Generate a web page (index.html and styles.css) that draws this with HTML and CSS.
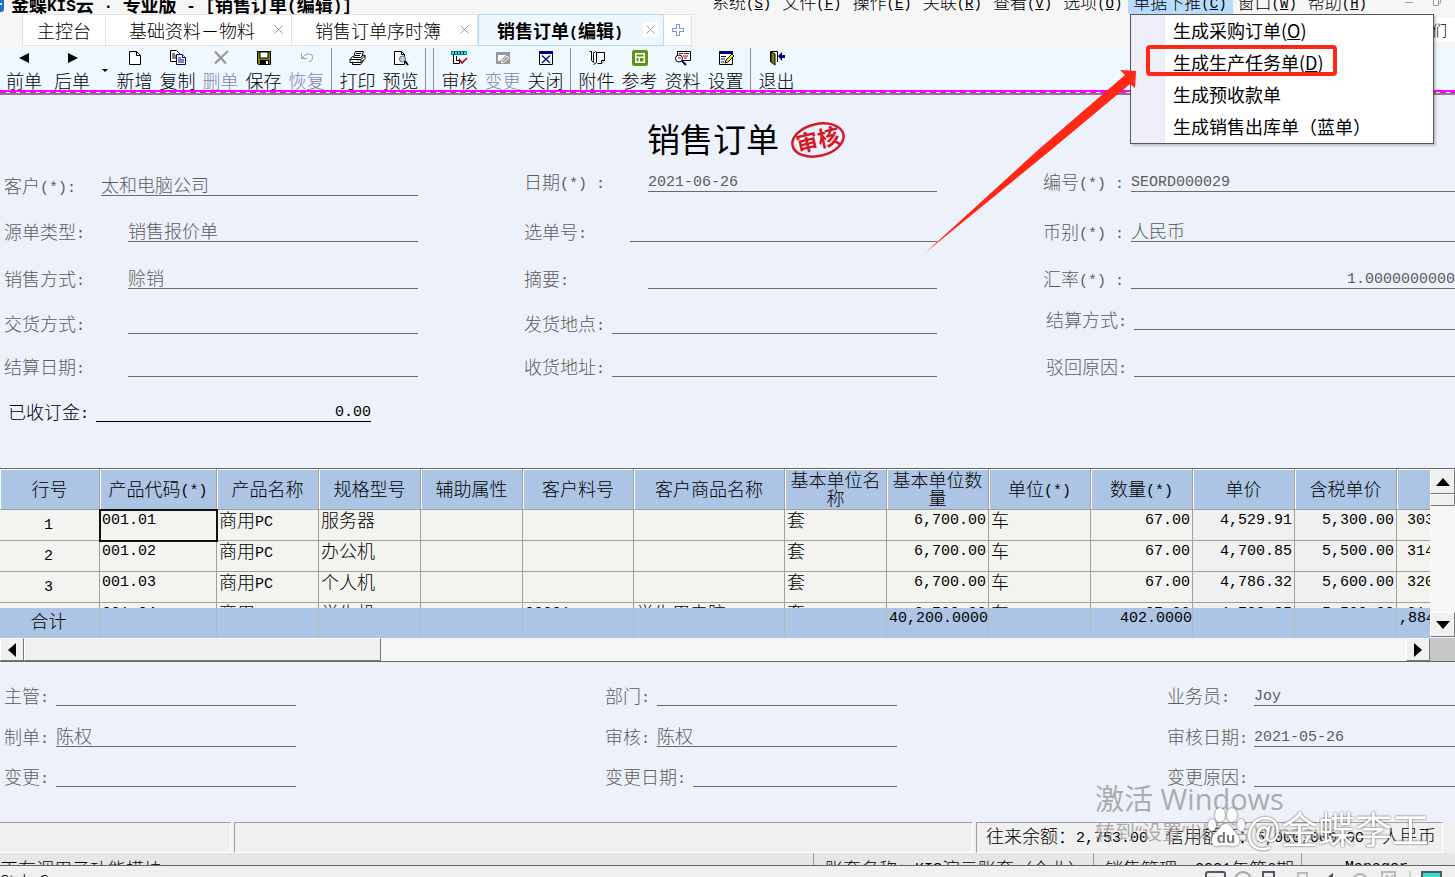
FILE: index.html
```html
<!DOCTYPE html>
<html lang="zh-CN">
<head>
<meta charset="utf-8">
<title>销售订单(编辑)</title>
<link rel="stylesheet" href="styles.css">
</head>
<body>
<div class="app">
  <header class="titlebar">
    <svg class="app-logo" width="4" height="20" viewBox="0 0 4 20"><path d="M0 2h1q3 0 3 3v10q0 3-3 3H0z" fill="#1b6fd0"/><path d="M0 10h2" stroke="#fff" stroke-width="2"/></svg>
    <h1 class="app-title">金蝶<span class="n">KIS</span>云<span class="n"> · </span>专业版<span class="n"> - [</span>销售订单<span class="n">(</span>编辑<span class="n">)]</span></h1>
    <nav class="menubar">
      <button>系统<span class="n">(<u>S</u>)</span></button>
      <button>文件<span class="n">(<u>F</u>)</span></button>
      <button>操作<span class="n">(<u>E</u>)</span></button>
      <button>关联<span class="n">(<u>R</u>)</span></button>
      <button>查看<span class="n">(<u>V</u>)</span></button>
      <button>选项<span class="n">(<u>O</u>)</span></button>
      <button class="open">单据下推<span class="n">(<u>C</u>)</span></button>
      <button>窗口<span class="n">(<u>W</u>)</span></button>
      <button>帮助<span class="n">(<u>H</u>)</span></button>
    </nav>
    <svg class="win-controls" width="82" height="14" viewBox="0 0 82 14" fill="none" stroke="#9a9a9a"><path d="M32 2.500h8M60.500 0v5.500h5V0M62.500-1v-2h5v6h-2"/></svg>
  </header>

  <div class="tabs">
    <button class="tab tab-home">主控台</button>
    <button class="tab">基础资料－物料<svg class="x" width="9" height="9" viewBox="0 0 9 9"><path d="M.5.5l8 8M8.500.5l-8 8"/></svg></button>
    <button class="tab">销售订单序时簿<svg class="x" width="9" height="9" viewBox="0 0 9 9"><path d="M.5.5l8 8M8.500.5l-8 8"/></svg></button>
    <button class="tab active"><span>销售订单<span class="n">(</span>编辑<span class="n">)</span></span><svg class="x boxed" width="15" height="15" viewBox="-3 -3 15 15"><path d="M.5.5l8 8M8.500.5l-8 8"/></svg></button>
    <button class="tab tab-add" aria-label="新建标签"><svg width="12" height="12" viewBox="0 0 12 12" fill="#fff" stroke="#6f93d0"><path d="M4.500.5h3v4h4v3h-4v4h-3v-4h-4v-3h4z"/></svg></button>
    <span class="side-tip">们</span>
  </div>

  <div class="toolbar">
    <button class="wide"><svg width="16" height="16" viewBox="0 0 16 16"><path d="M3 8l10-5v10z"/></svg>前单</button>
    <button class="wide"><svg width="16" height="16" viewBox="0 0 16 16"><path d="M14 8L4 3v10z"/></svg>后单</button>
    <button class="drop" aria-label="更多"><svg width="6" height="4" viewBox="0 0 6 4"><path d="M0 0h6L3 3z"/></svg></button>
    <button><svg width="16" height="16" viewBox="0 0 16 16" fill="#fff" stroke="#000"><path d="M2.500 1.500h7l4 4v9h-11zM9.500 1.500v4h4"/></svg>新增</button>
    <button><svg width="16" height="16" viewBox="0 0 16 16" fill="#fff"><path d="M.5.5h6l3 3v8h-9z" stroke="#000"/><path d="M2 4h3M2 6h4M2 8h4" stroke="#000"/><path d="M6.500 4.500h6l3 3v7h-9z" stroke="#000080"/><path d="M8 8h3M8 10h6M8 12h6M12.500 4.500v3h3" stroke="#000080"/></svg>复制</button>
    <button disabled><svg width="16" height="16" viewBox="0 0 16 16" fill="none"><path d="M3 2.500l11 12M16 2L3 14.500" stroke="#fff" stroke-width="2"/><path d="M2 1.500l11 12M15 1L2 13.500" stroke="#999" stroke-width="2.400"/></svg>删单</button>
    <button><svg width="16" height="16" viewBox="0 0 16 16"><path d="M1.500 1.500h13v13h-12l-1-1z" fill="#808000" stroke="#000"/><path d="M4 2h8v6H4z" fill="#fff" stroke="#000"/><path d="M4 10h9v5H4z"/><path d="M10 11h2v3h-2z" fill="#fff"/></svg>保存</button>
    <button disabled><svg width="16" height="16" viewBox="0 0 16 16" fill="none"><path d="M2.500 4v5h5M3 8q5-6 10-3 2 5-3 7" stroke="#fff" transform="translate(1 1)"/><path d="M2.500 3.500v5h5M3 8q5-6 10-3 2 5-3 7" stroke="#999"/></svg>恢复</button>
    <i class="sep"></i>
    <button><svg width="17" height="16" viewBox="0 0 17 16" fill="#fff" stroke="#000"><path d="M6.500 1.500h8l-2 6h-8zM7 3.500h5M6 5.500h5"/><path d="M3.500 6.500L1 9.500v3h11l4-4v-3l-2-.5-2 2.500H5zM1 9.500h11v3M12 9.500l4-4M3.500 12.500v2h8l3-4"/><path d="M8 11h2" stroke="#c9b400"/></svg>打印</button>
    <button><svg width="16" height="16" viewBox="0 0 16 16" fill="#fff" stroke="#000"><path d="M1.500 1.500h7l3 3v10h-10zM8.500 1.500v3h3"/><circle cx="9.500" cy="9" r="3" fill="#a8e0e0" stroke="#666"/><path d="M12 11l3 4" stroke-width="2"/></svg>预览</button>
    <i class="sep"></i><i class="sep"></i>
    <button><svg width="17" height="16" viewBox="0 0 17 16" fill="none" stroke="#000"><path d="M.5 1.500h15v3H.5z" fill="#0ff" stroke="#008080"/><path d="M3.500 2v2M6.500 2v2M9.500 2v2M12.500 2v2"/><path d="M2.500 5v8.500h6v-3h-3V6" fill="#fff"/><path d="M8 9l3 4 5-5" stroke="#b00020" stroke-width="1.600"/></svg>审核</button>
    <button disabled><svg width="16" height="16" viewBox="0 0 16 16"><path d="M1 2h14v12H1z" fill="#999"/><path d="M3 5h8L5 11H3z" fill="#fff"/><path d="M6 12l6-6 2 2-6 5z" fill="#999" stroke="#fff"/></svg>变更</button>
    <button><svg width="16" height="16" viewBox="0 0 16 16" fill="#fff"><path d="M1.500 1.500h13v13h-13z" stroke="#000"/><path d="M1 1h14v3H1z" fill="#000080"/><path d="M4 5.500l8 7.500M12 5.500L4 13" stroke="#000080" stroke-width="1.300"/></svg>关闭</button>
    <i class="sep"></i>
    <button><svg width="17" height="16" viewBox="0 0 17 16" fill="#fff" stroke="#000"><path d="M5.500 2.500h11v8l-3 3h-4"/><path d="M1.500 1.500h2v9l2 2V3.500l2-2 1 1v10l-3 2M13.500 13.500v-3h3"/></svg>附件</button>
    <button><svg width="16" height="16" viewBox="0 0 16 16"><rect width="16" height="16" rx="2" fill="#5d9612"/><path d="M3 3h10v10H3z" fill="#fff"/><path d="M4.500 4.500h7v2h-7zM4.500 8h2v3.500h-2zM8 8h3.500v3.500H8z" fill="#5d9612"/></svg>参考</button>
    <button><svg width="17" height="16" viewBox="0 0 17 16" fill="#fff" stroke="#000"><path d="M3.500 1.500h13v9h-13z"/><path d="M5 3.500h4M10 3.500h5M9 6h5M10 8h3" stroke="#a00020"/><circle cx="5" cy="8.500" r="3.500"/><path d="M4 8h3" stroke="#a00020"/><path d="M8 11l4 4" stroke="#000080" stroke-width="2"/></svg>资料</button>
    <button><svg width="16" height="16" viewBox="0 0 16 16" fill="#fff"><path d="M1.500 1.500h13v13h-13z" stroke="#000"/><path d="M1 1h14v3H1z" fill="#000080"/><path d="M3 6.500h5M3 9h4M3 12h3" stroke="#000080"/><path d="M7 13l1-3 6-6 2 2-6 6z" fill="#ffe600" stroke="#000"/></svg>设置</button>
    <i class="sep"></i>
    <button><svg width="16" height="16" viewBox="0 0 16 16"><path d="M1.500 12V1.500h7V12" fill="none" stroke="#000"/><path d="M2 2l4 2v11l-4-3z" fill="#808000" stroke="#000"/><path d="M9 6l4-4v3h3v3h-3v3z" fill="#000080"/></svg>退出</button>
  </div>
  <div class="ruler"></div>

  <main>
    <div class="doc-title">
      <h2>销售订单</h2>
      <svg width="56" height="40" viewBox="0 0 56 40"><g transform="rotate(-13 28 20)"><ellipse cx="28" cy="20" rx="26" ry="16" fill="none" stroke="#d7182a" stroke-width="2.500"/><text class="stamp-text" x="28" y="28" text-anchor="middle">审核</text></g></svg>
    </div>

    <form class="fields">
      <div class="col col-a">
        <div class="field"><label for="f1" class="w-short">客户<span class="n">(*):</span></label><input id="f1" value="太和电脑公司"></div>
        <div class="field"><label for="f2">源单类型<span class="n">:</span></label><input id="f2" value="销售报价单"></div>
        <div class="field"><label for="f3">销售方式<span class="n">:</span></label><input id="f3" value="赊销"></div>
        <div class="field"><label for="f4">交货方式<span class="n">:</span></label><input id="f4"></div>
        <div class="field"><label for="f5">结算日期<span class="n">:</span></label><input id="f5"></div>
        <div class="field deposit"><label for="f6">已收订金<span class="n">:</span></label><input id="f6" class="n right" value="0.00"></div>
      </div>
      <div class="col col-b">
        <div class="field"><label for="f7">日期<span class="n">(*) :</span></label><input id="f7" class="n" value="2021-06-26"></div>
        <div class="field"><label for="f8" class="w-mid">选单号<span class="n">:</span></label><input id="f8"></div>
        <div class="field"><label for="f9">摘要<span class="n">:</span></label><input id="f9"></div>
        <div class="field"><label for="f10" class="w-short">发货地点<span class="n">:</span></label><input id="f10"></div>
        <div class="field"><label for="f11" class="w-short">收货地址<span class="n">:</span></label><input id="f11"></div>
      </div>
      <div class="col col-c">
        <div class="field"><label for="f12">编号<span class="n">(*) :</span></label><input id="f12" class="n" value="SEORD000029"></div>
        <div class="field"><label for="f13">币别<span class="n">(*) :</span></label><input id="f13" value="人民币"></div>
        <div class="field"><label for="f14">汇率<span class="n">(*) :</span></label><input id="f14" class="n right" value="1.0000000000"></div>
        <div class="field inset"><label for="f15">结算方式<span class="n">:</span></label><input id="f15"></div>
        <div class="field inset"><label for="f16">驳回原因<span class="n">:</span></label><input id="f16"></div>
      </div>
    </form>

    <section class="sheet">
      <div class="sheet-main">
        <div class="sheet-data">
          <div class="rows">
            <table>
              <colgroup><col class="c-no"><col class="c-code"><col class="c-std"><col class="c-std"><col class="c-std"><col class="c-cust"><col class="c-goods"><col class="c-std"><col class="c-std"><col class="c-std"><col class="c-std"><col class="c-std"><col class="c-std"><col class="c-std"></colgroup>
              <thead><tr><th>行号</th><th>产品代码<span class="n">(*)</span></th><th>产品名称</th><th>规格型号</th><th>辅助属性</th><th>客户料号</th><th>客户商品名称</th><th>基本单位名称</th><th>基本单位数量</th><th>单位<span class="n">(*)</span></th><th>数量<span class="n">(*)</span></th><th>单价</th><th>含税单价</th><th></th></tr></thead>
              <tbody>
                <tr><td class="no">1</td><td class="n selected">001.01</td><td>商用<span class="n">PC</span></td><td>服务器</td><td></td><td></td><td></td><td>套</td><td class="n right">6,700.00</td><td>车</td><td class="n right">67.00</td><td class="n right grey">4,529.91</td><td class="n right grey">5,300.00</td><td class="n amount">303,504</td></tr>
                <tr><td class="no">2</td><td class="n">001.02</td><td>商用<span class="n">PC</span></td><td>办公机</td><td></td><td></td><td></td><td>套</td><td class="n right">6,700.00</td><td>车</td><td class="n right">67.00</td><td class="n right grey">4,700.85</td><td class="n right grey">5,500.00</td><td class="n amount">314,957</td></tr>
                <tr><td class="no">3</td><td class="n">001.03</td><td>商用<span class="n">PC</span></td><td>个人机</td><td></td><td></td><td></td><td>套</td><td class="n right">6,700.00</td><td>车</td><td class="n right">67.00</td><td class="n right grey">4,786.32</td><td class="n right grey">5,600.00</td><td class="n amount">320,683</td></tr>
                <tr><td class="no">4</td><td class="n">001.04</td><td>商用<span class="n">PC</span></td><td>学生机</td><td></td><td class="n">00001</td><td>学生用电脑</td><td>套</td><td class="n right">6,700.00</td><td>车</td><td class="n right">67.00</td><td class="n right grey">4,700.85</td><td class="n right grey">5,500.00</td><td class="n amount">314,957</td></tr>
              </tbody>
            </table>
          </div>
          <table class="totals">
            <colgroup><col class="c-no"><col class="c-code"><col class="c-std"><col class="c-std"><col class="c-std"><col class="c-cust"><col class="c-goods"><col class="c-std"><col class="c-std"><col class="c-std"><col class="c-std"><col class="c-std"><col class="c-std"><col class="c-std"></colgroup>
            <tbody><tr><td class="no">合计</td><td></td><td></td><td></td><td></td><td></td><td></td><td></td><td class="n right">40,200.0000</td><td></td><td class="n right">402.0000</td><td></td><td></td><td class="n">,884</td></tr></tbody>
          </table>
        </div>
        <div class="vscroll">
          <button aria-label="向上"><svg width="14" height="8" viewBox="0 0 14 8"><path d="M0 8h14L7 0z"/></svg></button>
          <div class="vthumb"></div>
          <div class="track"></div>
          <button aria-label="向下"><svg width="14" height="8" viewBox="0 0 14 8"><path d="M0 0h14L7 8z"/></svg></button>
        </div>
      </div>
      <div class="hscroll">
        <button aria-label="向左"><svg width="8" height="14" viewBox="0 0 8 14"><path d="M8 0v14L0 7z"/></svg></button>
        <div class="hthumb"></div>
        <div class="track"></div>
        <button aria-label="向右"><svg width="8" height="14" viewBox="0 0 8 14"><path d="M0 0v14l8-7z"/></svg></button>
        <div class="corner"></div>
      </div>
    </section>

    <form class="signoff">
      <div class="field s1"><label for="g1">主管<span class="n">:</span></label><input id="g1"></div>
      <div class="field s2"><label for="g2">部门<span class="n">:</span></label><input id="g2"></div>
      <div class="field s3"><label for="g3">业务员<span class="n">:</span></label><input id="g3" class="n" value="Joy"></div>
      <div class="field s1"><label for="g4">制单<span class="n">:</span></label><input id="g4" value="陈权"></div>
      <div class="field s2"><label for="g5">审核<span class="n">:</span></label><input id="g5" value="陈权"></div>
      <div class="field s3"><label for="g6">审核日期<span class="n">:</span></label><input id="g6" class="n" value="2021-05-26"></div>
      <div class="field s1"><label for="g7">变更<span class="n">:</span></label><input id="g7"></div>
      <div class="field s2 long"><label for="g8">变更日期<span class="n">:</span></label><input id="g8"></div>
      <div class="field s3"><label for="g9">变更原因<span class="n">:</span></label><input id="g9"></div>
    </form>
  </main>

  <div class="balance">
    <div class="panel p1"></div><div class="panel p2"></div>
    <div class="panel p3"><span>往来余额：<span class="n">2,753.00</span></span><span>信用额度：<span class="n">5,000,000.00</span></span><span>人民币</span></div>
  </div>
  <footer class="status">
    <span class="st1">正在调用子功能模块</span>
    <span class="st2">账套名称：<span class="n">KIS</span>演示账套（企业）</span>
    <span class="st3">销售管理<span class="n">  2021</span>年第<span class="n">6</span>期</span>
    <span class="st4 n">Manager</span>
  </footer>
  <div class="taskbar">
    <span>Style C</span>
    <svg width="251" height="9" viewBox="0 0 251 9" fill="none" stroke="#4c5a68" stroke-width="2"><path d="M2 9V3q0-2 2-2h15q2 0 2 2v6"/><circle cx="39" cy="9" r="8" stroke="#9aa4ad"/><path d="M59 9V1h11v8"/><path d="M94 9V2h9v7" stroke="#b4bac0"/><path d="M122 9l6-5v5"/><circle cx="156" cy="10" r="7" stroke="#b4bac0"/><path d="M178 9V1h13v8M182 4l4 4 3-4" stroke="#b4bac0"/><path d="M206 0v9" stroke="#aaa" stroke-width="1"/><path d="M218 1h19v10h-19z" fill="#35dfcb"/></svg>
  </div>

  <div class="popup" role="menu">
    <button role="menuitem">生成采购订单(<u>O</u>)</button>
    <button role="menuitem">生成生产任务单(<u>D</u>)</button>
    <button role="menuitem">生成预收款单</button>
    <button role="menuitem">生成销售出库单（蓝单）</button>
    <div class="marker"></div>
  </div>
  <svg class="pointer" width="214" height="184" viewBox="0 0 214 184"><path d="M0 184L113 81l87-75-5-5 16 1-1 17-5-4-79 66z" fill="#ff2716"/></svg>
  <div class="activate"><p>激活 Windows</p><small>转到“设置”以激活 Windows。</small></div>
  <div class="credit">
    <svg width="38" height="42" viewBox="0 0 38 42" fill="#fff"><ellipse cx="13" cy="8" rx="5" ry="7"/><ellipse cx="25" cy="8" rx="5" ry="7"/><ellipse cx="5" cy="18" rx="4" ry="6"/><ellipse cx="34" cy="18" rx="4" ry="6"/><path d="M19 17c5 0 6 5 10 9 5 5 5 13-2 13-4 0-12-1-16 0-7 1-8-8-3-13 5-4 6-9 11-9z"/><text class="du" x="19" y="36" text-anchor="middle">du</text></svg>
    <span>@金蝶李工</span>
  </div>
</div>
</body>
</html>
```
FILE: styles.css
```css
* { box-sizing: border-box; }
body {
  margin: 0;
  background: #edf2fa;
  color: #000;
  font: 300 18px/20px "Noto Sans CJK SC", sans-serif;
  overflow: hidden;
}
button, input {
  font: inherit;
  color: inherit;
  border: 0;
  padding: 0;
  margin: 0;
  background: none;
  border-radius: 0;
}
.n { font-family: "Liberation Mono", "Noto Sans CJK SC", monospace; font-size: 15px; white-space: pre; }
span.n { line-height: 0; vertical-align: 1px; }
.right { text-align: right; }
.app { position: relative; }

/* title and menus */
.titlebar {
  display: flex;
  align-items: flex-end;
  height: 14px;
  overflow: hidden;
  background: #f6f6f6;
}
.app-logo { flex: none; }
.app-title { margin: 0 0 0 7px; font-size: 18px; line-height: 20px; font-weight: 700; white-space: nowrap; }
.app-title .n { font-size: 16px; }
.menubar { display: flex; margin-left: auto; }
.menubar button { height: 22px; padding: 0 6px 3px 5px; font-size: 17px; line-height: 18px; white-space: nowrap; }
.menubar .n { font-size: 14px; }
.menubar .open { background: #b8dbfb; }
.win-controls { flex: none; }

.tabs { display: flex; height: 32px; padding-left: 22px; background: #f6f6f6; }
.tab {
  display: flex;
  align-items: center;
  justify-content: space-between;
  width: 186px;
  padding: 0 8px 0 23px;
  border: 1px solid #e2e2e2;
  border-left-width: 0;
  background: #fff;
  white-space: nowrap;
}
.tab-home { width: 84px; padding: 0; justify-content: center; border-left-width: 1px; }
.tab.active { padding: 0 5px 0 18px; background: #eef6fe; border: 1px solid #b5daf8; font-weight: 700; }
.tab-add { width: 28px; padding: 0; justify-content: center; }
.x { margin-bottom: 2px; fill: none; stroke: #999; }
.boxed { background: #fff; }
.side-tip { width: 23px; height: 24px; margin: 4px 0 0 auto; background: #fff; font-size: 15px; line-height: 24px; }

/* toolbar */
.toolbar { display: flex; height: 44px; background: #eff7ff; }
.toolbar button {
  display: flex;
  flex-direction: column;
  align-items: center;
  gap: 5px;
  width: 43px;
  padding-top: 4px;
  line-height: 18px;
}
.toolbar svg { flex: none; width: auto; height: 16px; }
.toolbar .wide { width: 48px; }
.toolbar .drop { width: 17px; padding-top: 23px; }
.toolbar .drop svg { height: 4px; }
.toolbar button:disabled { color: #8585a8; }
.sep { width: 1px; margin: 2px 4px 0 3px; background: #909090; }
.ruler {
  height: 5px;
  background:
    linear-gradient(#808080, #808080) 0 3px / 100% 2px no-repeat,
    linear-gradient(#f0f, #f0f) 0 0 / 100% 2px no-repeat,
    repeating-linear-gradient(90deg, #f0f 0 6px, #fff 6px 10px);
}

/* document heading */
.doc-title { display: flex; align-items: center; justify-content: center; gap: 11px; height: 73px; padding: 16px 0 0 38px; }
.doc-title h2 { margin: 0; padding-bottom: 3px; font-size: 33px; line-height: 40px; font-weight: 400; }
.stamp-text { font: 700 22px "Noto Sans CJK SC", sans-serif; fill: #d7182a; }

/* fields */
.fields { display: grid; grid-template-columns: 418fr 413fr 412fr; column-gap: 106px; color: #5c5c5c; }
.col { display: grid; align-content: start; align-items: end; }
.col-a { grid-template-rows: 28px 46px 47px 45px 43px 45px; padding-left: 4px; }
.col-b { grid-template-rows: 24px 50px 47px 45px 43px; }
.col-c { grid-template-rows: 24px 50px 47px 41px 47px; }
.field { display: flex; align-items: flex-end; min-width: 0; }
.field label { flex: none; width: 124px; padding-bottom: 2px; line-height: 18px; white-space: nowrap; }
.field input { flex: 1; min-width: 0; width: 0; height: 22px; padding-bottom: 2px; border-bottom: 1px solid #6b6b6b; outline: 0; }
.field input.n { padding: 3px 0 0; }
.col-a .w-short { width: 97px; }
.col-b .w-mid { width: 106px; }
.col-b .w-short { width: 88px; }
.col-c label { width: 88px; }
.col-c .inset { padding-left: 3px; }
.deposit { padding: 0 47px 0 4px; color: #000; }
.deposit label { width: 88px; }
.deposit input { border-color: #000; }

/* item grid */
.sheet { margin-top: 46px; border: 1px solid #666; border-width: 1px 0; }
.sheet-main { display: flex; }
.sheet-data { flex: 1; min-width: 0; overflow: hidden; }
.rows { height: 139px; overflow: hidden; }
table { width: 1498px; table-layout: fixed; border-collapse: separate; border-spacing: 0; }
.c-no { width: 100px; }
.c-code { width: 117px; }
.c-std { width: 102px; }
.c-cust { width: 111px; }
.c-goods { width: 151px; }
th {
  height: 41px;
  padding: 0 3px 3px;
  background: #adc5e5;
  border: 1px solid #a0a0a0;
  border-width: 0 1px 1px 0;
  box-shadow: inset 1px 1px #fff;
  font-weight: 300;
  line-height: 18px;
}
td {
  height: 31px;
  padding: 0 2px;
  background: #f3f4ef;
  border: 1px solid #a0a0a0;
  border-width: 0 1px 1px 0;
  vertical-align: top;
  line-height: 18px;
  white-space: nowrap;
  overflow: hidden;
}
td.n { padding-top: 2px; }
td.no { text-align: center; padding: 7px 2px 0 0; }
tbody td.no { font-family: "Liberation Mono", "Noto Sans CJK SC", monospace; font-size: 15px; }
td.grey { background: #f0f0f0; }
td.amount { padding-left: 10px; }
td.selected { outline: 2px solid #111; outline-offset: -1px; }
.totals td { height: 30px; background: #adc5e5; border-width: 0 1px 0 0; border-color: #b8b8b8; }
.totals td.right { padding-right: 0; }
.totals td.no { padding-top: 6px; font-size: 18px; }

.vscroll { display: flex; flex-direction: column; width: 25px; padding-bottom: 1px; }
.vscroll button, .hscroll button, .vthumb, .hthumb {
  flex: none;
  display: flex;
  align-items: center;
  justify-content: center;
  background: #f0f0f0;
  border: 1px solid #fff;
  border-right-color: #777;
  border-bottom-color: #777;
}
.vscroll button { height: 25px; }
.vthumb { height: 12px; }
.track { flex: 1; background: repeating-conic-gradient(#eee 0 25%, #fff 0 50%) 0 0 / 2px 2px; }
.hscroll { display: flex; height: 23px; }
.hscroll button { width: 24px; }
.hthumb { width: 357px; }
.corner { width: 25px; background: #c8c8c8; }

/* sign-off */
.signoff {
  display: grid;
  grid-template-columns: 296fr 309fr 292fr 270fr 288fr;
  grid-template-rows: 44px 41px 40px;
  align-items: end;
  padding-bottom: 35px;
  color: #5c5c5c;
}
.s1 { grid-column: 1; padding-left: 4px; }
.s2 { grid-column: 3; }
.s3 { grid-column: 5; }
.signoff .field label { width: 52px; }
.signoff .long label { width: 88px; }
.signoff .s3 label { width: 87px; }

/* status bars */
.balance { display: flex; gap: 3px; height: 31px; padding-right: 12px; background: #f0f0f0; }
.panel { border: 1px solid #fff; border-top-color: #a0a0a0; border-left-color: #a0a0a0; background: #f0f0f0; }
.p1 { width: 231px; border-left: 0; }
.p2 { flex: 1; }
.p3 { display: flex; gap: 18px; width: 467px; padding: 2px 0 0 9px; white-space: nowrap; }
.status { display: flex; height: 12px; overflow: hidden; background: #e6e6e6; line-height: 20px; white-space: nowrap; }
.status > span { flex: none; padding-top: 5px; line-height: 20px; }
.status span span.n { vertical-align: 3px; }
.status .st1 { flex: 1; }
.st2, .st3, .status .st4 { border-left: 1px solid #999; padding-left: 11px; }
.st2 { width: 280px; }
.st3 { width: 208px; }
.status .st4 { width: 154px; padding-left: 43px; }
.taskbar {
  display: flex;
  justify-content: space-between;
  align-items: flex-start;
  height: 12px;
  overflow: hidden;
  border-top: 1px solid #666;
  background: #f0f0f0;
  font-size: 16px;
}
.taskbar span { padding-top: 4px; }
.taskbar svg { flex: none; margin-top: 5px; }

/* layers above the page */
.popup {
  position: absolute;
  top: 14px;
  right: 21px;
  width: 304px;
  border: 1px solid #555;
  background: linear-gradient(90deg, #eeeef8 34px, #fff 34px);
  box-shadow: 2px 2px 2px #0003;
}
.popup button { display: block; width: 100%; height: 32px; padding: 0 0 2px 42px; text-align: left; font-weight: 400; }
.marker { position: absolute; top: 30px; left: 15px; width: 191px; height: 31px; border: 4px solid #ff2716; border-radius: 4px; }
.pointer { position: absolute; top: 69px; right: 316px; }
.activate { position: absolute; top: 780px; right: 30px; width: 330px; color: #999c; font-family: "Open Sans", "Noto Sans CJK SC", sans-serif; font-weight: 400; white-space: nowrap; }
.activate p { margin: 0; font-size: 29px; line-height: 38px; }
.activate small { font-size: 20px; line-height: 30px; }
.credit {
  position: absolute;
  top: 807px;
  right: 26px;
  display: flex;
  align-items: center;
  gap: 1px;
  color: #fff;
  font-size: 37px;
  font-weight: 400;
  line-height: 42px;
  white-space: nowrap;
  filter: drop-shadow(0 0 1px #555);
}
.du { font: 700 15px "Liberation Sans", sans-serif; fill: #777; }
```
